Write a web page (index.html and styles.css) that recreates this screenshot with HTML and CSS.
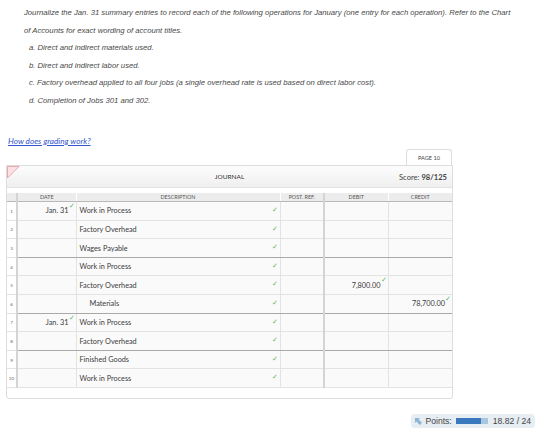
FILE: index.html
```html
<html>
    <head>
        <title>Journal</title>
        <link rel="stylesheet" href="styles.css">
    </head>
    <body>
        <!--Enunciado del ejercicio-->
        <div class="instructions">
            <p>Journalize the Jan. 31 summary entries to record each of the following operations for January (one entry for each operation). Refer to the Chart<br>of Accounts for exact wording of account titles.</p>
            <p class="item">a. Direct and indirect materials used.</p>
            <p class="item">b. Direct and indirect labor used.</p>
            <p class="item">c. Factory overhead applied to all four jobs (a single overhead rate is used based on direct labor cost).</p>
            <p class="item">d. Completion of Jobs 301 and 302.</p>
        </div>
        <a class="grading" href="#">How does grading work?</a>

        <div class="journalWrap">
            <div class="tabRow"><span class="pageTab">PAGE 10</span></div>
            <div class="journal">
                <div class="journalHead">
                    <svg class="flag" width="13" height="13" viewBox="0 0 13 13">
                        <path d="M0.5 0.5 H12 L0.5 12 Z" fill="#fbe1e3" stroke="#e6a9b0" stroke-width="1"/>
                    </svg>
                    <span class="journalTitle">JOURNAL</span>
                    <span class="score">Score: <b>98/125</b></span>
                </div>
                <div class="gap"></div>
                <table class="entries">
                    <colgroup>
                        <col class="cNum"><col class="cDate"><col class="cDesc"><col class="cRef"><col class="cDebit"><col class="cCredit">
                    </colgroup>
                    <thead>
                        <tr>
                            <th class="num"></th>
                            <th>DATE</th>
                            <th>DESCRIPTION</th>
                            <th class="sepR2">POST. REF.</th>
                            <th>DEBIT</th>
                            <th>CREDIT</th>
                        </tr>
                    </thead>
                    <tbody>
                        <tr>
                            <td class="num">1</td>
                            <td class="date">Jan. 31<i class="ok">&#10003;</i></td>
                            <td class="desc">Work in Process<i class="ok">&#10003;</i></td>
                            <td class="ref"></td><td class="amt"></td><td class="amt"></td>
                        </tr>
                        <tr>
                            <td class="num">2</td>
                            <td class="date"></td>
                            <td class="desc">Factory Overhead<i class="ok">&#10003;</i></td>
                            <td class="ref"></td><td class="amt"></td><td class="amt"></td>
                        </tr>
                        <tr class="end">
                            <td class="num">3</td>
                            <td class="date"></td>
                            <td class="desc">Wages Payable<i class="ok">&#10003;</i></td>
                            <td class="ref"></td><td class="amt"></td><td class="amt"></td>
                        </tr>
                        <tr>
                            <td class="num">4</td>
                            <td class="date"></td>
                            <td class="desc">Work in Process<i class="ok">&#10003;</i></td>
                            <td class="ref"></td><td class="amt"></td><td class="amt"></td>
                        </tr>
                        <tr>
                            <td class="num">5</td>
                            <td class="date"></td>
                            <td class="desc">Factory Overhead<i class="ok">&#10003;</i></td>
                            <td class="ref"></td><td class="amt">7,800.00<i class="ok">&#10003;</i></td><td class="amt"></td>
                        </tr>
                        <tr class="end">
                            <td class="num">6</td>
                            <td class="date"></td>
                            <td class="desc credit">Materials<i class="ok">&#10003;</i></td>
                            <td class="ref"></td><td class="amt"></td><td class="amt">78,700.00<i class="ok">&#10003;</i></td>
                        </tr>
                        <tr>
                            <td class="num">7</td>
                            <td class="date">Jan. 31<i class="ok">&#10003;</i></td>
                            <td class="desc">Work in Process<i class="ok">&#10003;</i></td>
                            <td class="ref"></td><td class="amt"></td><td class="amt"></td>
                        </tr>
                        <tr class="end">
                            <td class="num">8</td>
                            <td class="date"></td>
                            <td class="desc">Factory Overhead<i class="ok">&#10003;</i></td>
                            <td class="ref"></td><td class="amt"></td><td class="amt"></td>
                        </tr>
                        <tr>
                            <td class="num">9</td>
                            <td class="date"></td>
                            <td class="desc">Finished Goods<i class="ok">&#10003;</i></td>
                            <td class="ref"></td><td class="amt"></td><td class="amt"></td>
                        </tr>
                        <tr class="last">
                            <td class="num">10</td>
                            <td class="date"></td>
                            <td class="desc">Work in Process<i class="ok">&#10003;</i></td>
                            <td class="ref"></td><td class="amt"></td><td class="amt"></td>
                        </tr>
                    </tbody>
                </table>
                <div class="journalFoot"></div>
            </div>
        </div>

        <!--Puntaje total-->
        <div class="pointsRow">
            <div class="points">
                <svg class="pIcon" width="7" height="7" viewBox="0 0 7 7">
                    <path d="M0 0 H5 L3.6 1.4 L7 4.8 L4.8 7 L1.4 3.6 L0 5 Z" fill="#8db4d3"/>
                </svg>
                <span>Points:</span>
                <span class="bar"><span class="fill" style="width: 78%;"></span></span>
                <span>18.82 / 24</span>
            </div>
        </div>
    </body>
</html>
```
FILE: styles.css
```css
body
{
    margin: 0;
    background-color: #fff;
    font-family: "Liberation Sans", Arial, sans-serif;
}
.instructions
{
    padding: 4px 0 0 24px;
    font-style: italic;
    font-size: 7.7px;
    line-height: 17.6px;
    color: #484848;
}
.instructions p
{
    margin: 0;
    white-space: nowrap;
}
.instructions .item
{
    padding-left: 5px;
}
.grading
{
    display: block;
    margin: 26px 0 0 8px;
    font-family: Lato, sans-serif;
    font-style: italic;
    font-size: 8.2px;
    line-height: 10px;
    color: #3355cc;
    text-decoration: underline;
}
.journalWrap
{
    margin: 3px 0 0 6px;
    width: 447px;
}
.tabRow
{
    display: flex;
    justify-content: flex-end;
    padding-right: 1px;
}
.pageTab
{
    width: 46px;
    height: 16px;
    line-height: 16px;
    text-align: center;
    font-family: Lato, sans-serif;
    font-size: 5.6px;
    color: #444;
    border: 1px solid #ddd;
    border-bottom: none;
    border-radius: 3px 3px 0 0;
    background-color: #fff;
    box-sizing: border-box;
}
.journal
{
    border: 1px solid #ddd;
    border-radius: 0 0 3px 3px;
    font-family: Lato, sans-serif;
}
.journalHead
{
    position: relative;
    display: flex;
    align-items: center;
    justify-content: center;
    height: 21px;
    background: linear-gradient(#fdfdfd, #efefef);
    border-bottom: 1px solid #e2e2e2;
}
.flag
{
    position: absolute;
    left: 0;
    top: 0;
}
.journalTitle
{
    font-size: 6.5px;
    color: #333;
}
.score
{
    position: absolute;
    right: 5px;
    top: 6px;
    font-size: 7.6px;
    color: #444;
}
.score b
{
    font-weight: 700;
}
.gap
{
    height: 5px;
}
.entries
{
    width: 100%;
    border-collapse: collapse;
    table-layout: fixed;
}
.cNum { width: 10px; }
.cDate { width: 59px; }
.cDesc { width: 204px; }
.cRef { width: 44px; }
.cDebit { width: 64px; }
.cCredit { width: 64px; }
.entries th
{
    height: 9px;
    padding: 0;
    font-size: 5.4px;
    font-weight: normal;
    color: #555;
    background-color: #ececec;
    border-left: 1px solid #fff;
    border-bottom: 1px solid #b9b9b9;
}
.entries td
{
    position: relative;
    height: 18.6px;
    padding: 0 4px;
    font-size: 7.3px;
    color: #3a3a3a;
    background-color: #fafafa;
    border-left: 1px solid #e3e3e3;
    border-bottom: 1px solid #e3e3e3;
    white-space: nowrap;
}
.entries td.num
{
    padding: 0;
    text-align: center;
    font-size: 4.6px;
    color: #666;
    background-color: #fff;
    border-left: none;
    border-right: 2px solid #d4d4d4;
}
.entries th.num
{
    border-left: none;
    border-right: 2px solid #d4d4d4;
}
.entries th.sepR2,
.entries td.ref
{
    border-right: 2px solid #d4d4d4;
}
.entries td.date,
.entries td.amt
{
    text-align: right;
    padding-right: 7px;
}
.entries td.desc
{
    padding-left: 3px;
}
.entries td.credit
{
    padding-left: 13px;
}
.entries tr.end td
{
    border-bottom: 1px solid #a9a9a9;
}
.entries tr.end td.num
{
    border-bottom: 1px solid #e3e3e3;
}
.ok
{
    position: absolute;
    top: 1px;
    right: 1px;
    font-style: normal;
    font-size: 6.5px;
    line-height: 6.5px;
    color: #5cb85c;
}
.entries td.desc .ok
{
    top: 5px;
    right: 2px;
}
.journalFoot
{
    height: 10px;
}
.pointsRow
{
    display: flex;
    justify-content: flex-end;
    padding: 15px 25px 0 0;
}
.points
{
    display: flex;
    align-items: center;
    gap: 3px;
    height: 14px;
    padding: 0 4px;
    border-radius: 4px;
    background-color: #e6edf3;
    font-size: 8.6px;
    color: #444;
}
.bar
{
    display: inline-block;
    width: 32px;
    height: 6px;
    margin: 0 2px 0 1px;
    background-color: #a9c6de;
}
.fill
{
    display: block;
    height: 100%;
    background-color: #3a78bd;
}
```
